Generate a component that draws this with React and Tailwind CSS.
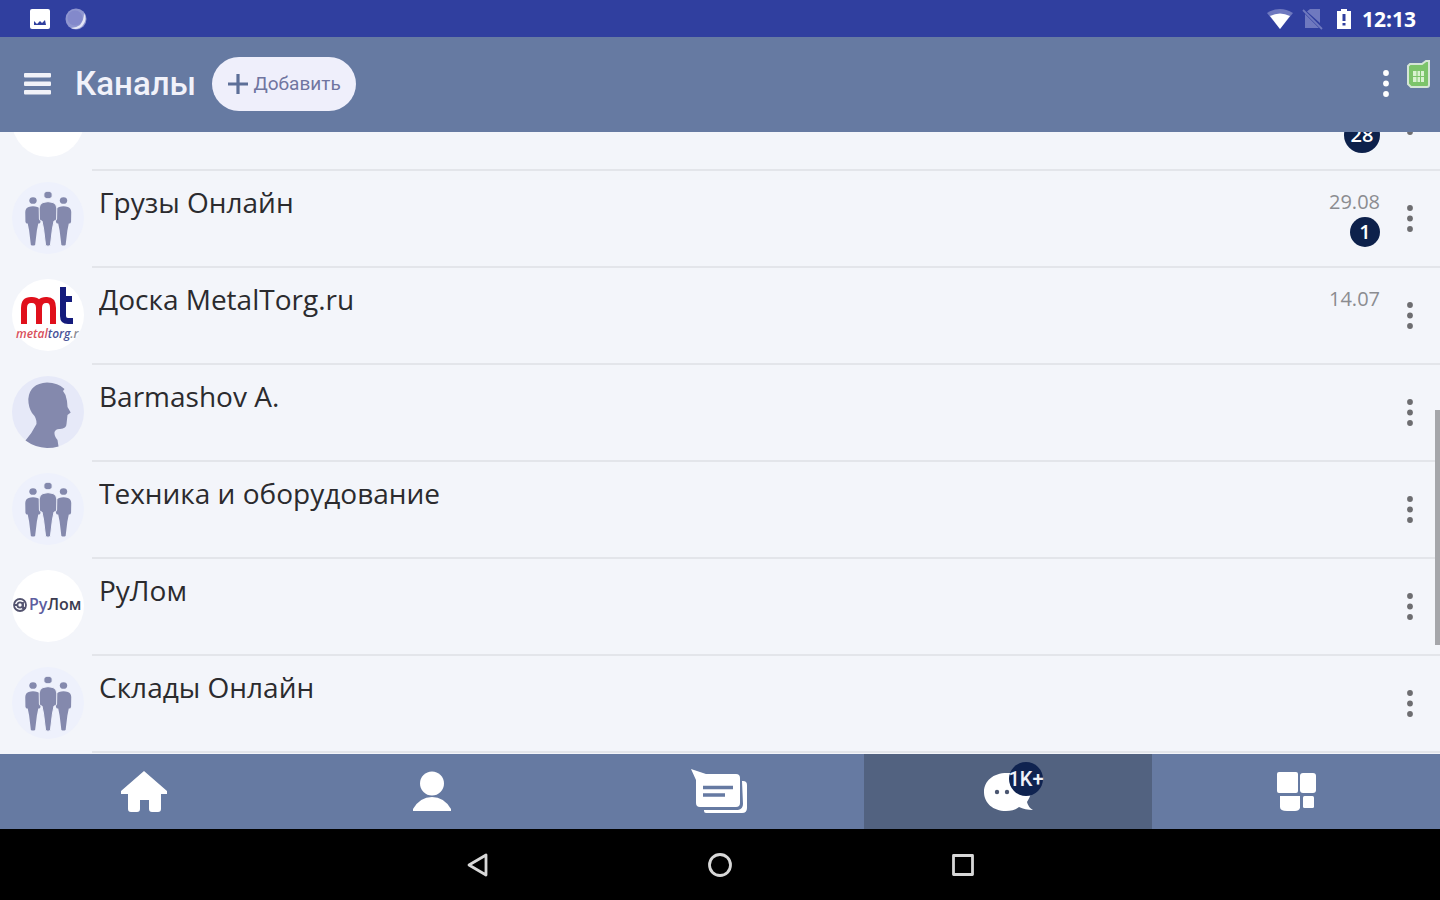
const groups = [
  { kind: 'blank', title: '', date: '', unread: '28' },
  { kind: 'group', title: 'Грузы Онлайн', date: '29.08', unread: '1' },
  { kind: 'metal', title: 'Доска MetalTorg.ru', date: '14.07' },
  { kind: 'person', title: 'Barmashov A.' },
  { kind: 'group', title: 'Техника и оборудование' },
  { kind: 'rulom', title: 'РуЛом' },
  { kind: 'group', title: 'Склады Онлайн' },
];

function Dots({ className }) {
  return (
    <svg className={className} width="8" height="30" viewBox="0 0 8 30" fill="currentColor" aria-hidden="true">
      <circle cx="4" cy="4" r="2.9" />
      <circle cx="4" cy="14.5" r="2.9" />
      <circle cx="4" cy="25" r="2.9" />
    </svg>
  );
}

function Figure({ x, y, s }) {
  return (
    <g transform={`translate(${x} ${y}) scale(${s})`}>
      <ellipse cx="0" cy="4" rx="4.2" ry="3.8" />
      <path d="M-5 11.500 Q0 9.800 5 11.500 Q8.600 13 8.800 17 L8.600 28 Q8 30.500 6 30 L4.400 38 L2.400 54.500 Q0 56 -2.400 54.500 L-4.400 38 L-6 30 Q-8 30.500 -8.600 28 L-8.800 17 Q-8.600 13 -5 11.500 Z" />
    </g>
  );
}

function Avatar({ kind }) {
  if (kind === 'metal') {
    return (
      <svg className="size-18 shrink-0" viewBox="0 0 72 72" aria-hidden="true">
        <circle cx="36" cy="36" r="36" fill="#fff" />
        <g fill="none" strokeWidth="6">
          <path stroke="#e0101c" d="M12 45 V29 Q12 21 19 21 H20 Q27 21 27 29 V45 M27 29 Q27 21 34 21 H35 Q41 21 41 29 V45" />
          <path stroke="#141b7c" d="M51 8 V37 Q51 42 56 42 H61 M51 20 H60" />
        </g>
        <text x="4" y="59" fontFamily="Open Sans, sans-serif" fontSize="12" fontWeight="600" fontStyle="italic">
          <tspan fill="#d9505c">metal</tspan><tspan fill="#4a5499">torg</tspan><tspan fill="#8c8c94">.r</tspan>
        </text>
      </svg>
    );
  }
  if (kind === 'rulom') {
    return (
      <svg className="size-18 shrink-0" viewBox="0 0 72 72" aria-hidden="true">
        <circle cx="36" cy="36" r="36" fill="#fff" />
        <g fill="none" stroke="#53536f" strokeWidth="1.800">
          <circle cx="8" cy="35" r="6" />
          <circle cx="8" cy="35" r="2.600" />
          <path d="M2 35 H5 M11 32 V38 H14" />
        </g>
        <text x="17" y="40" fontFamily="Open Sans, sans-serif" fontSize="16" fontWeight="600">
          <tspan fill="#5d5da0">Ру</tspan><tspan fill="#3c3c50">Лом</tspan>
        </text>
      </svg>
    );
  }
  if (kind === 'person') {
    return (
      <svg className="size-18 shrink-0" viewBox="0 0 72 72" aria-hidden="true">
        <circle cx="36" cy="36" r="36" fill="#e6e9f8" />
        <path fill="#8489ad" d="M52.500 13 Q46 6.500 35 6.500 Q17.500 7.500 16.300 23 Q16.300 31 20 37 Q25 42 24.500 48 Q20 57 13.500 64.500 Q23 71.500 35 72 Q41 72 46.500 70.500 L45.500 64 Q42 60 42.500 56 Q44 52.500 48 53 Q54.500 52.500 54.500 48 L55.500 39 L58.700 36.500 L55.500 31 Q55.500 25 53.500 19 L51 15 Z" />
      </svg>
    );
  }
  if (kind === 'group') {
    return (
      <svg className="size-18 shrink-0" viewBox="0 0 72 72" aria-hidden="true">
        <circle cx="36" cy="36" r="36" fill="#eef1fc" />
        <g fill="#8489ad">
          <Figure x={21} y={15} s={0.88} />
          <Figure x={51.5} y={15} s={0.88} />
          <g stroke="#eef1fc" strokeWidth="1"><Figure x={36} y={9} s={1} /></g>
        </g>
      </svg>
    );
  }
  return <div className="size-18 shrink-0 rounded-full bg-white" />;
}

function Row({ kind, title, date, unread }) {
  return (
    <li className="flex h-[97px] shrink-0 pl-3">
      <div className="flex items-center pb-1">
        <Avatar kind={kind} />
      </div>
      <div className="ml-2 flex min-w-0 flex-1 border-b-2 border-[#e3e5ea] pl-[7px]">
        <a href="#channel" className="min-w-0 flex-1 truncate pt-[11px] text-[28px] leading-10 text-[#2b2b2e]">{title}</a>
        <div className="flex flex-col items-end pt-[19px]">
          <span className="h-6 text-[20px] leading-6 text-[#8b8c90]">{date}</span>
          {unread && (
            <div className="mt-1 flex h-7 items-center">
              <span className={`flex shrink-0 items-center justify-center rounded-full bg-[#0d214b] text-[20px] leading-6 font-semibold text-white ${unread.length > 1 ? 'size-9' : 'size-[30px]'}`}>
                {unread}
              </span>
            </div>
          )}
        </div>
        <button type="button" aria-label="Меню канала" className="flex w-[60px] items-center justify-center text-[#6d6d70]">
          <Dots />
        </button>
      </div>
    </li>
  );
}

function NavItem({ label, active, children }) {
  return (
    <a href="#tab" aria-label={label} className={`flex flex-1 items-center justify-center text-white ${active ? 'bg-[#526280]' : ''}`}>
      {children}
    </a>
  );
}

export default function App() {
  return (
    <div className="flex h-screen flex-col overflow-hidden bg-[#f3f5fa] font-['Open_Sans','Noto_Sans',sans-serif]">
      <div className="flex h-[37px] shrink-0 items-center justify-between bg-[#303f9f] pr-6 pl-7 text-white">
        <div className="flex items-center gap-3">
          <svg width="24" height="24" viewBox="0 0 24 24" aria-hidden="true">
            <rect x="2" y="2" width="20" height="20" rx="2" fill="#fff" />
            <path d="M6 18 L6 14 L9 17 L12 14 L14 16 L17 13 L18 18 Z" fill="#303f9f" />
          </svg>
          <svg width="24" height="24" viewBox="0 0 24 24" aria-hidden="true">
            <circle cx="12" cy="12" r="10.500" fill="#8f96d0" />
            <path d="M20 6 A10.500 10.500 0 0 1 7 21 Q12 21 16 18 Q20 13 20 6 Z" fill="#e4e6f6" />
            <circle cx="11" cy="11" r="7.500" fill="#8389cb" />
          </svg>
        </div>
        <div className="flex items-center">
          <svg width="28" height="22" viewBox="0 0 28 22" aria-hidden="true">
            <path d="M1 5 Q14 -3 27 5 L14 21 Z" fill="#6f79bf" />
            <path d="M4 8 Q14 3 24 8 L14 21 Z" fill="#fff" />
          </svg>
          <svg className="ml-2" width="22" height="22" viewBox="0 0 22 22" aria-hidden="true">
            <path d="M8 1 H18 V15 L5 3.500 Z M3 6 L17 20 H3 Z" fill="#6f79bf" />
            <path d="M1 2 L20 21" stroke="#6f79bf" strokeWidth="1.800" />
          </svg>
          <svg className="ml-3" width="16" height="22" viewBox="0 0 16 22" aria-hidden="true">
            <path d="M5 1 H11 V3 H15 V21 H1 V3 H5 Z" fill="#fff" />
            <path d="M6.500 6 H9.500 V13 H6.500 Z M6.500 15 H9.500 V17.500 H6.500 Z" fill="#303f9f" />
          </svg>
          <span className="ml-[10px] text-[21px] leading-6 font-bold">12:13</span>
        </div>
      </div>

      <header className="flex h-[95px] shrink-0 items-center bg-[#667aa2] pr-2 pb-px pl-6">
        <button type="button" aria-label="Открыть меню" className="text-[#f1f2f8]">
          <svg width="28" height="22" viewBox="0 0 28 22" fill="currentColor" aria-hidden="true">
            <rect y="0" width="27" height="4.500" rx="1" />
            <rect y="8.500" width="27" height="4.500" rx="1" />
            <rect y="17" width="27" height="4.500" rx="1" />
          </svg>
        </button>
        <h1 className="ml-[23px] font-['Roboto',sans-serif] text-[33px] leading-10 font-medium text-[#f1f2fa]">Каналы</h1>
        <button type="button" className="ml-4 flex h-[54px] w-36 items-center justify-center gap-1 rounded-full bg-[#efeffb] font-['Roboto',sans-serif] text-[19px] text-[#7075a0]">
          <svg width="22" height="22" viewBox="0 0 22 22" aria-hidden="true">
            <path d="M11 1 V21 M1 11 H21" stroke="#5d6f98" strokeWidth="3.200" />
          </svg>
          Добавить
        </button>
        <div className="flex-1" />
        <button type="button" aria-label="Ещё" className="text-white">
          <Dots />
        </button>
        <svg className="mb-5 ml-4" width="26" height="30" viewBox="0 0 26 30" aria-hidden="true">
          <path d="M4 5 H16 L20 2 H23 V26 Q23 28 21 28 H5 L2 25 V7 Z" fill="#7cc46a" stroke="#d5e6d6" strokeWidth="2" />
          <path d="M7 12 H18 V23 H7 Z" fill="#d9f2d0" />
          <path d="M11 12 V23 M14.500 12 V23 M7 17.500 H18" stroke="#7cc46a" strokeWidth="1" />
        </svg>
      </header>

      <main className="relative flex min-h-0 flex-1 flex-col justify-end overflow-hidden pb-px">
        <ul className="flex flex-col">
          {groups.map((g, i) => <Row key={i} {...g} />)}
        </ul>
        <div className="absolute right-0 bottom-[109px] h-[235px] w-[5px] bg-[#a5a6aa]" />
      </main>

      <nav className="flex h-[75px] shrink-0 bg-[#667aa2]">
        <NavItem label="Главная">
          <svg width="48" height="44" viewBox="0 0 48 44" fill="currentColor" aria-hidden="true">
            <path d="M24 1 L47 21 V24 H41 V39 Q41 42 38 42 H32 Q29 42 29 39 V30 H20 V39 Q20 42 17 42 H11 Q8 42 8 39 V24 H1 V21 Z" />
          </svg>
        </NavItem>
        <NavItem label="Профиль">
          <svg width="40" height="42" viewBox="0 0 40 42" fill="currentColor" aria-hidden="true">
            <circle cx="20" cy="12.500" r="12" />
            <path d="M1 40 V38 Q8 26 20 26 Q32 26 39 38 V40 Z" />
          </svg>
        </NavItem>
        <NavItem label="Сообщения">
          <svg width="60" height="48" viewBox="0 0 60 48" aria-hidden="true">
            <path d="M1 1 L16 6 H46 Q50 6 50 10 V35 Q50 39 46 39 H10 Q6 39 6 35 V12 Z" fill="#fff" />
            <path d="M52 13 H53 Q57 13 57 17 V40 Q57 45 52 45 H16 Q14 45 14 43 V42 H48 Q53 41 53 36 Z" fill="#fff" />
            <path d="M13 19.500 H43 M13 27 H35" stroke="#667aa2" strokeWidth="3.500" />
          </svg>
        </NavItem>
        <NavItem label="Каналы" active>
          <span className="relative">
            <svg width="50" height="40" viewBox="0 0 50 40" aria-hidden="true">
              <path d="M24 1 C38 1 48 9 48 19 C48 24 45 28 44 30 Q45 35 50 38 Q42 38 36 35 Q31 39 23 39 C10 39 1 31 1 20 C1 9 10 1 24 1 Z" fill="#fff" />
              <circle cx="14" cy="20" r="2.200" fill="#4b5670" />
              <circle cx="24" cy="20" r="2.200" fill="#4b5670" />
            </svg>
            <span className="absolute -top-2.5 left-[26px] flex size-[34px] items-center justify-center rounded-full bg-[#0f2350] font-['Roboto',sans-serif] text-[20px] font-medium text-[#f0f2fa]">1K+</span>
          </span>
        </NavItem>
        <NavItem label="Разделы">
          <svg width="40" height="40" viewBox="0 0 40 40" fill="currentColor" aria-hidden="true">
            <rect x="1" y="0" width="21" height="21" rx="2" />
            <rect x="24" y="1" width="16" height="20" rx="3" />
            <path d="M4 24 H24 V36 Q23 39 19 39 H11 Q4 39 4 35 Z" />
            <rect x="27" y="24" width="11" height="12" rx="1.500" />
          </svg>
        </NavItem>
      </nav>

      <footer className="flex h-[71px] shrink-0 items-center justify-center gap-[217px] bg-black text-[#d8d8d8]">
        <button type="button" aria-label="Назад">
          <svg width="26" height="26" viewBox="0 0 26 26" fill="none" stroke="currentColor" strokeWidth="2.800" strokeLinejoin="round" aria-hidden="true">
            <path d="M22 3 V23 L5 13 Z" />
          </svg>
        </button>
        <button type="button" aria-label="Домой">
          <svg width="26" height="26" viewBox="0 0 26 26" fill="none" stroke="currentColor" strokeWidth="2.800" aria-hidden="true">
            <circle cx="13" cy="13" r="10.500" />
          </svg>
        </button>
        <button type="button" aria-label="Обзор">
          <svg width="26" height="26" viewBox="0 0 26 26" fill="none" stroke="currentColor" strokeWidth="2.800" strokeLinejoin="round" aria-hidden="true">
            <rect x="3.500" y="3.500" width="19" height="19" />
          </svg>
        </button>
      </footer>
    </div>
  );
}
